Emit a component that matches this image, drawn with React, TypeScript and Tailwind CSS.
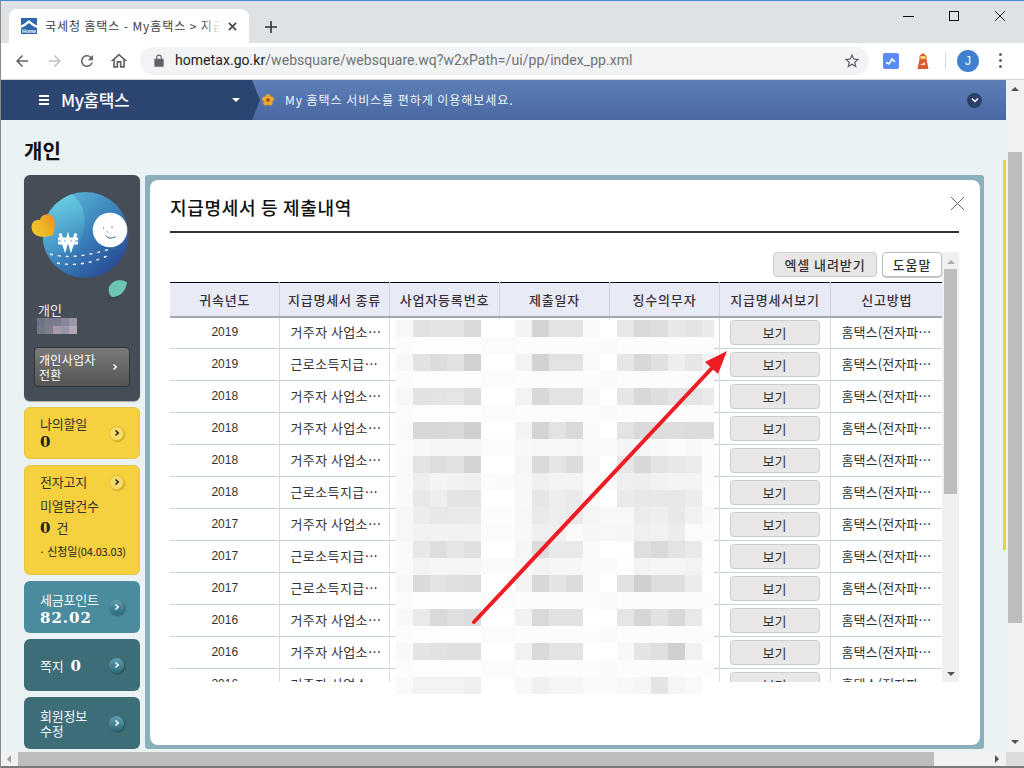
import React from "react";

const rows: [string, string][] = [
  ["2019", "거주자 사업소…"],
  ["2019", "근로소득지급…"],
  ["2018", "거주자 사업소…"],
  ["2018", "거주자 사업소…"],
  ["2018", "거주자 사업소…"],
  ["2018", "근로소득지급…"],
  ["2017", "거주자 사업소…"],
  ["2017", "근로소득지급…"],
  ["2017", "근로소득지급…"],
  ["2016", "거주자 사업소…"],
  ["2016", "거주자 사업소…"],
  ["2016", "거주자 사업소…"],
];

const white = "fc fd fd fd fd fb fb fc fc fc fc fc fa fc fc fc fc fc fc";
const mosaic = [
  "f7 e2 e4 e4 d9 ff ff f4 d3 e3 e3 f9 ff e8 d9 dd e8 e4 ea",
  white,
  "f7 e2 dc e2 d1 ff ff f3 d2 e3 e3 f9 ff e6 d8 e0 ee e6 f0",
  white,
  "f7 e2 e3 e5 dd ff ff f3 d8 e3 e3 f8 ff e6 d8 de e4 e4 e9",
  white,
  "fa d8 d8 d9 d0 ff ff f3 d4 e3 d9 f9 ff e3 da dd dd dc dc",
  "fb f8 f6 f6 f6 fb fb f8 f7 f7 f7 fa fa f4 f6 f8 fb f8 fc",
  "fa e3 dd e2 d4 ff ff f5 d9 e5 dc f8 ff e6 d8 e3 e8 eb fb",
  "f9 ee f4 f2 f0 fb fa f7 ef f3 f3 f9 f9 ef ee f2 f4 f4 fb",
  "fa e8 ee e4 e4 ff ff f8 e6 ed ea f8 ff ea e8 e8 e8 ec fd",
  "f7 ec e8 e9 ea fc fc f7 e9 ed ea f5 f8 f7 ec ee e8 f1 fa",
  "f7 f2 f2 f1 f1 fb fb f7 ef f0 f9 f6 f7 f6 ef f1 ec fb fb",
  "fa e8 de e6 e0 ff ff f6 dc e9 e9 fa ff ff df d9 e3 e9 ff",
  "fa f3 f6 f5 f5 fa fa f8 f3 f6 f6 fa fa fd f3 f5 f5 f3 fd",
  "f7 da e4 df dd ff ff f4 d8 e4 dc f9 ff e2 cf de de ec ff",
  white,
  "f8 e9 d9 df dc ff ff f2 d9 e2 e2 ff ff e5 d6 e2 d8 e9 ff",
  white,
  "f8 e4 e2 e0 e0 ff ff f2 d9 e3 e3 ff ff f8 e4 df cf f1 ff",
  white,
  "f9 f3 f3 f3 ef ff ff f8 f0 f5 f5 fa fa f8 f5 e4 f5 f9 ff",
];

function Mat({ d, className }: { d: string; className: string }) {
  return (
    <svg viewBox="0 0 24 24" className={className} fill="currentColor">
      <path d={d} />
    </svg>
  );
}

function Go({ dark }: { dark?: boolean }) {
  return (
    <span
      className={
        dark
          ? "flex h-[15px] w-[15px] shrink-0 items-center justify-center rounded-full bg-gradient-to-b from-[#5f9fb0] to-[#2c6a7c] shadow-[1px_1px_2px_rgba(0,0,0,0.35)]"
          : "flex h-[15px] w-[15px] shrink-0 items-center justify-center rounded-full border border-[#e0bd3c] bg-[#f9dc6a] shadow-[1px_1px_1px_rgba(150,110,0,0.4)]"
      }
    >
      <svg viewBox="0 0 8 8" className="h-2 w-2" fill="none" stroke={dark ? "#fff" : "#222"} strokeWidth="1.6">
        <path d="M2.5 1.5 5.2 4 2.5 6.5" />
      </svg>
    </span>
  );
}

function Globe() {
  return (
    <svg viewBox="0 0 116 128" className="block h-[128px] w-[116px]">
      <defs>
        <linearGradient id="g1" x1="0.1" y1="0.2" x2="0.8" y2="0.95">
          <stop offset="0" stopColor="#58b4d6" />
          <stop offset="0.5" stopColor="#3a80ba" />
          <stop offset="1" stopColor="#284a94" />
        </linearGradient>
        <linearGradient id="g3" x1="0.3" y1="0" x2="0.5" y2="1">
          <stop offset="0" stopColor="#6cd4e6" />
          <stop offset="1" stopColor="#4a9cc8" stopOpacity="0.2" />
        </linearGradient>
        <linearGradient id="g2" x1="0" y1="0.8" x2="1" y2="0.2">
          <stop offset="0" stopColor="#edc92a" />
          <stop offset="0.55" stopColor="#eeb125" />
          <stop offset="1" stopColor="#ee8f22" />
        </linearGradient>
        <clipPath id="c1">
          <circle cx="61.5" cy="60" r="43" />
        </clipPath>
      </defs>
      <circle cx="61.5" cy="60" r="43" fill="url(#g1)" />
      <path clipPath="url(#c1)" d="M46 18C62 28 66 50 52 74L16 82C6 50 24 24 46 18z" fill="url(#g3)" />
      <path d="M29 60C22 63 10 63 8 55 6 48 11 44 16 45 17 40 23 38 27 40 31 42 32 50 29 60z" fill="url(#g2)" />
      <circle cx="86" cy="55" r="17.3" fill="#fff" />
      <path d="M79 53h1.2M83 56.5l1 1M88 51.5l0 1.6" stroke="#3f5f8f" strokeWidth="1" fill="none" />
      <path d="M81.7 60.7Q85 65 91.7 61.7" stroke="#3f5f8f" strokeWidth="1" fill="none" />
      <path d="M36 58.5 41 73.5 44 62 47 73.5 52 58.5M34 64h20M34 68h20" stroke="#fff" strokeWidth="2.8" fill="none" />
      <path d="M26 79Q50 86 89 73" stroke="#fff" strokeWidth="1.4" strokeDasharray="3 5" fill="none" />
      <path d="M33 88Q58 93 85 80" stroke="#fff" strokeWidth="1.4" strokeDasharray="3 5" fill="none" />
      <path d="M82 124C86 121 92 120 97 120 94 124 88 126 82 124z" fill="#3d434c" />
      <path d="M103 107C95 103 88 106 85 112 84 117 86 121 88 122 96 122 102 116 103 107z" fill="#6cc5b4" />
    </svg>
  );
}

function Favicon() {
  return (
    <svg viewBox="0 0 16 16" className="h-4 w-4 shrink-0">
      <rect width="16" height="16" fill="#2f67ad" />
      <path d="M0 7.5Q5 5 8 2q3 3 8 5.5V10Q11 8 8 5 5 8 0 10z" fill="#fff" />
      <text x="1" y="15" fontSize="5" fontWeight="700" fill="#fff" fontFamily="Liberation Sans" textLength="14" lengthAdjust="spacingAndGlyphs">Home</text>
    </svg>
  );
}

export default function App() {
  return (
    <div className="flex h-[768px] w-[1024px] flex-col overflow-hidden border-t border-l border-[#4a86d0] border-l-[#8a8a8a] bg-white font-['Noto_Sans_CJK_KR','Noto_Sans',sans-serif]">
      {/* tab strip */}
      <div className="flex h-[42px] shrink-0 items-end bg-[#dee1e6] pl-[8px]">
        <div className="flex h-[34px] w-[240px] items-center rounded-t-lg bg-white pl-[12px] pr-[10px]">
          <Favicon />
          <div className="relative ml-2 w-[176px] overflow-hidden whitespace-nowrap text-[12px] tracking-[0.9px] text-[#3c4043]">
            국세청 홈택스 - My홈택스 &gt; 지급명세서
            <span className="absolute inset-y-0 right-0 w-5 bg-gradient-to-r from-transparent to-white" />
          </div>
          <svg viewBox="0 0 10 10" className="ml-[7px] h-[9px] w-[9px]" stroke="#444" strokeWidth="1.8">
            <path d="M1 1l8 8M9 1l-8 8" />
          </svg>
        </div>
        <svg viewBox="0 0 12 12" className="mb-[10px] ml-[16px] h-3 w-3" stroke="#333" strokeWidth="1.6">
          <path d="M6 0v12M0 6h12" />
        </svg>
        <div className="flex-1" />
        <div className="mb-[22px] flex items-center">
          <svg viewBox="0 0 11 10" className="h-[10px] w-[11px]" stroke="#111" strokeWidth="1" fill="none">
            <path d="M0 5.5h11" />
          </svg>
          <svg viewBox="0 0 10 10" className="ml-[35px] h-[10px] w-[10px]" stroke="#111" strokeWidth="1" fill="none">
            <rect x="0.5" y="0.5" width="9" height="9" />
          </svg>
          <svg viewBox="0 0 10 10" className="ml-[36px] mr-[19px] h-[10px] w-[10px]" stroke="#111" strokeWidth="0.9" fill="none">
            <path d="M0 0l10 10M10 0 0 10" />
          </svg>
        </div>
      </div>
      {/* toolbar */}
      <div className="flex h-[37px] shrink-0 items-center border-b border-[#d4d4d4] bg-white pb-[1px]">
        <Mat className="ml-[12px] h-[18px] w-[18px] text-[#5f6368]" d="M20 11H7.83l5.59-5.59L12 4l-8 8 8 8 1.41-1.41L7.83 13H20v-2z" />
        <Mat className="ml-[15px] h-[18px] w-[18px] text-[#bcbfc3]" d="M12 4l-1.41 1.41L16.17 11H4v2h12.17l-5.58 5.59L12 20l8-8z" />
        <Mat className="ml-[14px] h-[18px] w-[18px] text-[#5f6368]" d="M17.65 6.35A7.958 7.958 0 0 0 12 4c-4.42 0-7.99 3.58-7.99 8s3.57 8 7.99 8c3.73 0 6.84-2.55 7.73-6h-2.08A5.99 5.99 0 0 1 12 18c-3.31 0-6-2.69-6-6s2.69-6 6-6c1.66 0 3.14.69 4.22 1.78L13 11h7V4l-2.35 2.35z" />
        <Mat className="ml-[13px] h-[20px] w-[20px] text-[#5f6368]" d="M12 5.69l5 4.5V18h-2v-6H9v6H7v-7.81l5-4.5M12 3L2 12h3v8h6v-6h2v6h6v-8h3L12 3z" />
        <div className="ml-[11px] flex h-[28px] w-[729px] items-center rounded-full bg-[#f1f3f4] pl-[12px] pr-[8px]">
          <Mat className="h-[14px] w-[14px] text-[#5f6368]" d="M18 8h-1V6c0-2.76-2.24-5-5-5S7 3.24 7 6v2H6c-1.1 0-2 .9-2 2v10c0 1.1.9 2 2 2h12c1.1 0 2-.9 2-2V10c0-1.1-.9-2-2-2zM9 6c0-1.66 1.34-3 3-3s3 1.34 3 3v2H9V6z" />
          <span className="ml-[9px] flex-1 font-['Roboto',sans-serif] text-[14px] tracking-[0.05px] text-[#6f7276]">
            <span className="text-[#202124]">hometax.go.kr</span>/websquare/websquare.wq?w2xPath=/ui/pp/index_pp.xml
          </span>
          <Mat className="h-[18px] w-[18px] text-[#5f6368]" d="M22 9.24l-7.19-.62L12 2 9.19 8.63 2 9.24l5.46 4.73L5.82 21 12 17.27 18.18 21l-1.63-7.03L22 9.24zM12 15.4l-3.76 2.27 1-4.28-3.32-2.88 4.38-.38L12 6.1l1.71 4.04 4.38.38-3.32 2.88 1 4.28L12 15.4z" />
        </div>
        <svg viewBox="0 0 16 16" className="ml-[14px] h-4 w-4">
          <rect width="16" height="16" rx="2" fill="#5b8cf5" />
          <path d="M3 9.5 6 11 9 6l3 3" stroke="#fff" strokeWidth="1.6" fill="none" />
        </svg>
        <svg viewBox="0 0 14 16" className="ml-[17px] h-4 w-[14px]">
          <path d="M3.5 3 7 0l3.5 3v3l2 10h-11l2-10z" fill="#dd5a2d" />
          <rect x="4.5" y="3" width="5" height="3" fill="#f6d774" />
          <path d="M4 12l5-3v3z" fill="#f7e7df" />
        </svg>
        <span className="ml-[15px] h-[16px] w-px bg-[#d6d6d6]" />
        <span className="ml-[11px] flex h-[22px] w-[22px] items-center justify-center rounded-full bg-[#3f80cf] font-['Liberation_Sans',sans-serif] text-[12px] text-white">J</span>
        <span className="ml-[20px] flex flex-col gap-[3px]">
          <span className="h-[3px] w-[3px] rounded-full bg-[#5f6368]" />
          <span className="h-[3px] w-[3px] rounded-full bg-[#5f6368]" />
          <span className="h-[3px] w-[3px] rounded-full bg-[#5f6368]" />
        </span>
      </div>
      {/* page */}
      <div className="flex min-h-0 flex-1">
        <div className="w-[1005px] shrink-0 overflow-hidden bg-[#ebf2f4]">
          <div className="flex h-10 items-center bg-gradient-to-b from-[#5c7fb6] to-[#4a68a2]">
            <div className="flex h-10 w-[259px] shrink-0 items-center bg-[#2c4470] pl-[38px] [clip-path:polygon(0_0,251px_0,259px_50%,251px_100%,0_100%)]">
              <span className="flex w-[10px] flex-col gap-[2px]">
                <span className="h-[2px] bg-white" />
                <span className="h-[2px] bg-white" />
                <span className="h-[2px] bg-white" />
              </span>
              <span className="ml-[12px] text-[17px] font-medium tracking-[-0.4px] text-white">My홈택스</span>
              <span className="ml-[103px] h-0 w-0 border-x-[4px] border-t-[4px] border-x-transparent border-t-white" />
            </div>
            <svg viewBox="0 0 12 12" className="ml-[2px] h-3 w-3">
              <g fill="#f0a52c">
                <circle cx="6" cy="2.6" r="2.5" />
                <circle cx="9.4" cy="5" r="2.5" />
                <circle cx="8.1" cy="9.1" r="2.5" />
                <circle cx="3.9" cy="9.1" r="2.5" />
                <circle cx="2.6" cy="5" r="2.5" />
              </g>
              <circle cx="6" cy="6" r="1.8" fill="#8a5a12" />
            </svg>
            <span className="ml-[11px] text-[12px] tracking-[0.95px] text-[#f2f5fa]">My 홈택스 서비스를 편하게 이용해보세요.</span>
            <div className="flex-1" />
            <span className="mr-[24px] flex h-[15px] w-[15px] items-center justify-center rounded-full bg-[#2c3f68]">
              <svg viewBox="0 0 8 8" className="h-2 w-2" fill="none" stroke="#fff" strokeWidth="1.5">
                <path d="M1 2.5 4 5.5 7 2.5" />
              </svg>
            </span>
          </div>
          <div className="flex h-[55px] items-center pl-[23px] pt-[6px] text-[20px] font-bold text-[#111]">개인</div>
          <div className="flex pl-[23px]">
            {/* sidebar */}
            <div className="flex w-[116px] shrink-0 flex-col gap-[6px]">
              <div className="h-[226px] rounded-md bg-[#474d57] shadow-[0_1px_1px_rgba(0,0,0,0.3)]">
                <Globe />
                <div className="ml-[14px] text-[13px] leading-[14px] text-[#eee]">개인</div>
                <div className="ml-[13px] mt-px grid w-[39px] grid-cols-[repeat(5,8px)]">
                  {["#6d7384", "#777b8a", "#7c7b8d", "#878598", "#9a97a8", "#72788a", "#7d7f8d", "#a898ac", "#9497ab", "#b3a8b3"].map((c, i) => (
                    <span key={i} className="h-2" style={{ backgroundColor: c }} />
                  ))}
                </div>
                <div className="mx-[10px] mt-[13px] flex h-10 items-center rounded-[4px] border border-[#2f333a] bg-gradient-to-b from-[#7a7a7a] to-[#555] pl-[4px] pr-[10px] text-[12px] leading-[15px] tracking-[0.3px] text-white">
                  <span className="flex-1">개인사업자<br />전환</span>
                  <svg viewBox="0 0 8 8" className="h-2 w-2" fill="none" stroke="#fff" strokeWidth="1.6">
                    <path d="M2.5 1.5 5.2 4 2.5 6.5" />
                  </svg>
                </div>
              </div>
              <div className="flex h-[52px] items-center justify-between rounded-md border border-[#e6c44a] bg-[#f5d13f] pl-[15px] pr-[15px]">
                <div className="text-[13px] leading-[19px] tracking-[-0.2px] text-[#333]">
                  나의할일
                  <div className="font-['DejaVu_Serif',serif] text-[15px] font-bold leading-[19px] text-[#222]">0</div>
                </div>
                <Go />
              </div>
              <div className="h-[110px] rounded-md border border-[#e6c44a] bg-[#f5d13f] pl-[15px] pr-[15px] pt-[7px] text-[#333]">
                <div className="flex h-[18px] items-center justify-between text-[13px] tracking-[-0.2px]">
                  전자고지
                  <Go />
                </div>
                <div className="mt-[6px] text-[13px] leading-[18px] tracking-[-0.2px]">미열람건수</div>
                <div className="mt-[4px] flex items-center text-[13px] leading-[18px]">
                  <span className="font-['DejaVu_Serif',serif] text-[15px] font-bold text-[#222]">0</span>
                  <span className="ml-[6px]">건</span>
                </div>
                <div className="-ml-[1px] mt-[6px] whitespace-nowrap text-[11px] leading-[16px] tracking-[-0.15px] text-[#222]">· 신청일(04.03.03)</div>
              </div>
              <div className="flex h-[52px] items-center justify-between rounded-md bg-[#4a8b9e] pl-[16px] pr-[16px]">
                <div className="mt-[3px] text-[13px] leading-[19px] tracking-[-0.2px] text-[#f4f8f9]">
                  세금포인트
                  <div className="whitespace-nowrap font-['DejaVu_Serif',serif] text-[15px] font-bold leading-[19px] tracking-[1px] text-white">82.02</div>
                </div>
                <Go dark />
              </div>
              <div className="flex h-[52px] items-center justify-between rounded-md bg-[#3d6e78] pl-[16px] pr-[16px]">
                <div className="mt-[2px] flex items-center text-[13px] tracking-[-0.2px] text-[#f4f8f9]">
                  쪽지
                  <span className="ml-[7px] font-['DejaVu_Serif',serif] text-[15px] font-bold text-white">0</span>
                </div>
                <Go dark />
              </div>
              <div className="flex h-[52px] items-center justify-between rounded-md bg-[#3d6e78] pl-[16px] pr-[16px]">
                <div className="text-[13px] leading-[15px] tracking-[-0.2px] text-[#f4f8f9]">
                  회원정보
                  <br />
                  수정
                </div>
                <Go dark />
              </div>
            </div>
            {/* modal */}
            <div className="relative ml-[5px] h-[574px] w-[839px] shrink-0 rounded-[3px] bg-[#8bb0bc] pb-[4px] pl-[5px] pr-[4px] pt-[5px]">
              <div className="h-full rounded-lg bg-white pl-[20px] pr-[21px]">
                <div className="flex h-[53px] items-end justify-between border-b-2 border-[#333] pb-[12px]">
                  <span className="text-[18px] font-medium leading-[24px] tracking-[0.7px] text-[#111]">지급명세서 등 제출내역</span>
                  <svg viewBox="0 0 14 14" className="-mr-[5px] mb-[9px] h-[13px] w-[13px]" stroke="#556" strokeWidth="1" fill="none">
                    <path d="M0 0l14 14M14 0 0 14" />
                  </svg>
                </div>
                <div className="mt-[19px] flex h-[430px]">
                  <div className="w-[772px] shrink-0 overflow-hidden">
                    <div className="flex h-[30px] justify-end gap-[5px] pb-[5px]">
                      <span className="flex w-[104px] items-center justify-center rounded-sm border border-[#ccc] bg-[#e8e6e6] text-[13px] font-medium tracking-[0.9px] text-[#333]">엑셀 내려받기</span>
                      <span className="flex w-[60px] items-center justify-center rounded-sm border border-[#bbb] bg-white text-[13px] font-medium tracking-[0.9px] text-[#333] shadow-[0_1px_1px_rgba(0,0,0,0.2)]">도움말</span>
                    </div>
                    <table className="w-[772px] table-fixed border-collapse">
                      <colgroup>
                        <col className="w-[109px]" />
                        <col className="w-[110px]" />
                        <col className="w-[110px]" />
                        <col className="w-[110px]" />
                        <col className="w-[110px]" />
                        <col className="w-[111px]" />
                        <col className="w-[112px]" />
                      </colgroup>
                      <thead>
                        <tr className="h-[34px] border-t border-b-2 border-t-black border-b-[#a6a8ae] bg-[#e8ebf5] text-[13px] font-medium tracking-[0.8px] text-[#3a2f35]">
                          {["귀속년도", "지급명세서 종류", "사업자등록번호", "제출일자", "징수의무자", "지급명세서보기", "신고방법"].map((h, i) => (
                            <th key={h} className={i === 6 ? "p-0 pl-[1px] font-medium whitespace-nowrap" : "border-r border-[#cdd3e2] p-0 pl-[1px] font-medium whitespace-nowrap"}>
                              {h}
                            </th>
                          ))}
                        </tr>
                      </thead>
                      <tbody className="text-[13px] text-[#333]">
                        {rows.map(([y, t], i) => (
                          <tr key={i} className="h-[32px] border-b border-[#c9d1e2]">
                            <td className="border-r border-[#d8dce6] p-0 pb-[2px] pl-[1px] text-center font-['Liberation_Sans',sans-serif] text-[12px]">{y}</td>
                            <td className="whitespace-nowrap border-r border-[#d8dce6] p-0 pb-[2px] pl-[11px] tracking-[0.4px]">{t}</td>
                            <td className="border-r border-[#d8dce6] p-0" />
                            <td className="border-r border-[#d8dce6] p-0" />
                            <td className="border-r border-[#d8dce6] p-0" />
                            <td className="border-r border-[#d8dce6] p-0 text-center">
                              <span className="mx-auto flex h-[25px] w-[90px] items-center justify-center rounded-sm border border-[#ccc] bg-[#e8e6e6] text-[#333]">보기</span>
                            </td>
                            <td className="whitespace-nowrap p-0 pb-[2px] pl-[11px] tracking-[0.1px]">홈택스(전자파…</td>
                          </tr>
                        ))}
                      </tbody>
                    </table>
                  </div>
                  <div className="flex w-[17px] shrink-0 flex-col items-center bg-[#f0f0f0] pt-[8px]">
                    <span className="h-0 w-0 border-x-[4px] border-b-[4px] border-x-transparent border-b-[#aaa]" />
                    <span className="mt-[5px] h-[225px] w-[13px] bg-[#bdbdbd]" />
                    <div className="flex-1" />
                    <span className="mb-[6px] h-0 w-0 border-x-[4px] border-t-[4px] border-x-transparent border-t-[#555]" />
                  </div>
                </div>
              </div>
              {/* redaction mosaic */}
              <div className="absolute left-[251px] top-[145px] grid grid-cols-[repeat(18,17px)_12px] auto-rows-[17px]">
                {mosaic.flatMap((r, i) =>
                  r.split(" ").map((v, j) => <span key={`${i}-${j}`} style={{ backgroundColor: `#${v}${v}${v}` }} />)
                )}
              </div>
              {/* annotation arrow */}
              <svg viewBox="0 0 300 300" className="absolute left-[320px] top-[170px] h-[300px] w-[300px]">
                <path d="M9 277 247 23" stroke="#ee1c25" strokeWidth="4" strokeLinecap="round" fill="none" />
                <path d="M262 6 240 17 253 29z" fill="#ee1c25" />
              </svg>
            </div>
            <div className="ml-[19px] mt-[-15px] h-[390px] w-[3px] shrink-0 bg-[#f4cd3c]" />
          </div>
        </div>
        {/* vertical scrollbar */}
        <div className="flex w-[18px] shrink-0 flex-col items-center bg-[#f1f1f1] pt-[7px]">
          <span className="h-0 w-0 border-x-[4px] border-b-[4px] border-x-transparent border-b-[#505050]" />
          <span className="mt-[61px] h-[471px] w-[14px] bg-[#bdbdbd]" />
          <div className="flex-1" />
          <span className="mb-[8px] h-0 w-0 border-x-[4px] border-t-[4px] border-x-transparent border-t-[#505050]" />
        </div>
      </div>
      {/* horizontal scrollbar */}
      <div className="flex h-[16px] shrink-0 items-start border-b-2 border-[#7a7a7a] bg-[#f1f1f1]">
        <span className="ml-[6px] mt-[3px] h-0 w-0 border-y-[4px] border-r-[4px] border-y-transparent border-r-[#a0a0a0]" />
        <span className="ml-[7px] h-[14px] w-[916px] bg-[#bdbdbd]" />
        <div className="flex-1" />
        <span className="mr-[7px] mt-[3px] h-0 w-0 border-y-[4px] border-l-[4px] border-y-transparent border-l-[#505050]" />
        <span className="h-[14px] w-[18px] bg-[#dcdcdc]" />
      </div>
    </div>
  );
}
